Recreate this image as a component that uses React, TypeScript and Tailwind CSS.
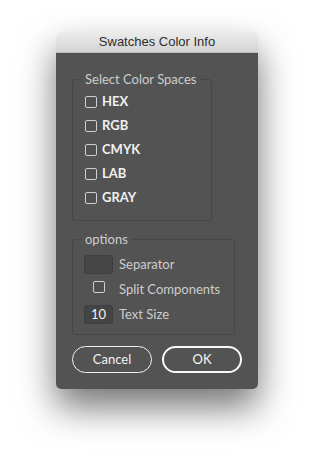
const spaces = ["HEX", "RGB", "CMYK", "LAB", "GRAY"];

function Box({ className = "" }: { className?: string }) {
  return (
    <span
      className={
        "block h-[12px] w-[12px] rounded-[2px] border border-[#cfcfcf] bg-[#505050] " +
        className
      }
    />
  );
}

export default function App() {
  return (
    <div className="h-[468px] w-[314px] bg-white pt-[32px] font-['Lato','Open_Sans',sans-serif]">
      <div className="mx-auto w-[202px] overflow-hidden rounded-[5px] shadow-[0_18px_36px_rgba(0,0,0,0.55)]">
        <div className="flex h-[21px] items-center justify-center border-b border-[#bdbdbd] bg-gradient-to-b from-[#ececec] to-[#d4d4d4] font-['Liberation_Sans',sans-serif] text-[13px] text-[#2e2e2e]">
          Swatches Color Info
        </div>
        <div className="bg-[#535353] px-[16px] pt-[18px] pb-[16px]">
          <fieldset className="w-[140px] rounded-[3px] border border-[#474747] pb-[10px]">
            <legend className="ml-[8px] px-[4px] text-[13px] leading-[16px] text-[#cdcdcd]">
              Select Color Spaces
            </legend>
            <div className="flex flex-col pt-[3px]">
              {spaces.map((s) => (
                <div key={s} className="flex h-[24px] items-center pl-[12px]">
                  <Box />
                  <span className="ml-[5px] text-[13px] font-bold text-[#f0f0f0]">{s}</span>
                </div>
              ))}
            </div>
          </fieldset>

          <fieldset className="mt-[10px] w-[163px] rounded-[3px] border border-[#474747] pb-[10px]">
            <legend className="ml-[8px] px-[4px] text-[13px] leading-[16px] text-[#cdcdcd]">
              options
            </legend>
            <div className="flex flex-col gap-[6px] pl-[11px] pt-[8px] text-[13px] text-[#cdcdcd]">
              <div className="flex h-[19px] items-center">
                <span className="block h-[19px] w-[29px] rounded-[3px] border border-[#3f3f3f] bg-[#474747]" />
                <span className="ml-[6px]">Separator</span>
              </div>
              <div className="flex h-[19px] items-center">
                <span className="flex w-[29px] justify-center">
                  <Box className="-translate-y-[3px]" />
                </span>
                <span className="ml-[6px]">Split Components</span>
              </div>
              <div className="flex h-[19px] items-center">
                <span className="flex h-[19px] w-[29px] items-center justify-center rounded-[3px] border border-[#3f3f3f] bg-[#444444] text-[13px] text-[#f0f0f0]">
                  10
                </span>
                <span className="ml-[6px]">Text Size</span>
              </div>
            </div>
          </fieldset>

          <div className="mt-[11px] flex gap-[10px]">
            <button className="flex h-[27px] w-[80px] items-center justify-center rounded-full border-[1.5px] border-[#f2f2f2] text-[13px] text-[#f2f2f2]">
              Cancel
            </button>
            <button className="flex h-[27px] w-[80px] items-center justify-center rounded-full border-2 border-[#f8f8f8] text-[13px] text-[#f8f8f8]">
              OK
            </button>
          </div>
        </div>
      </div>
    </div>
  );
}
